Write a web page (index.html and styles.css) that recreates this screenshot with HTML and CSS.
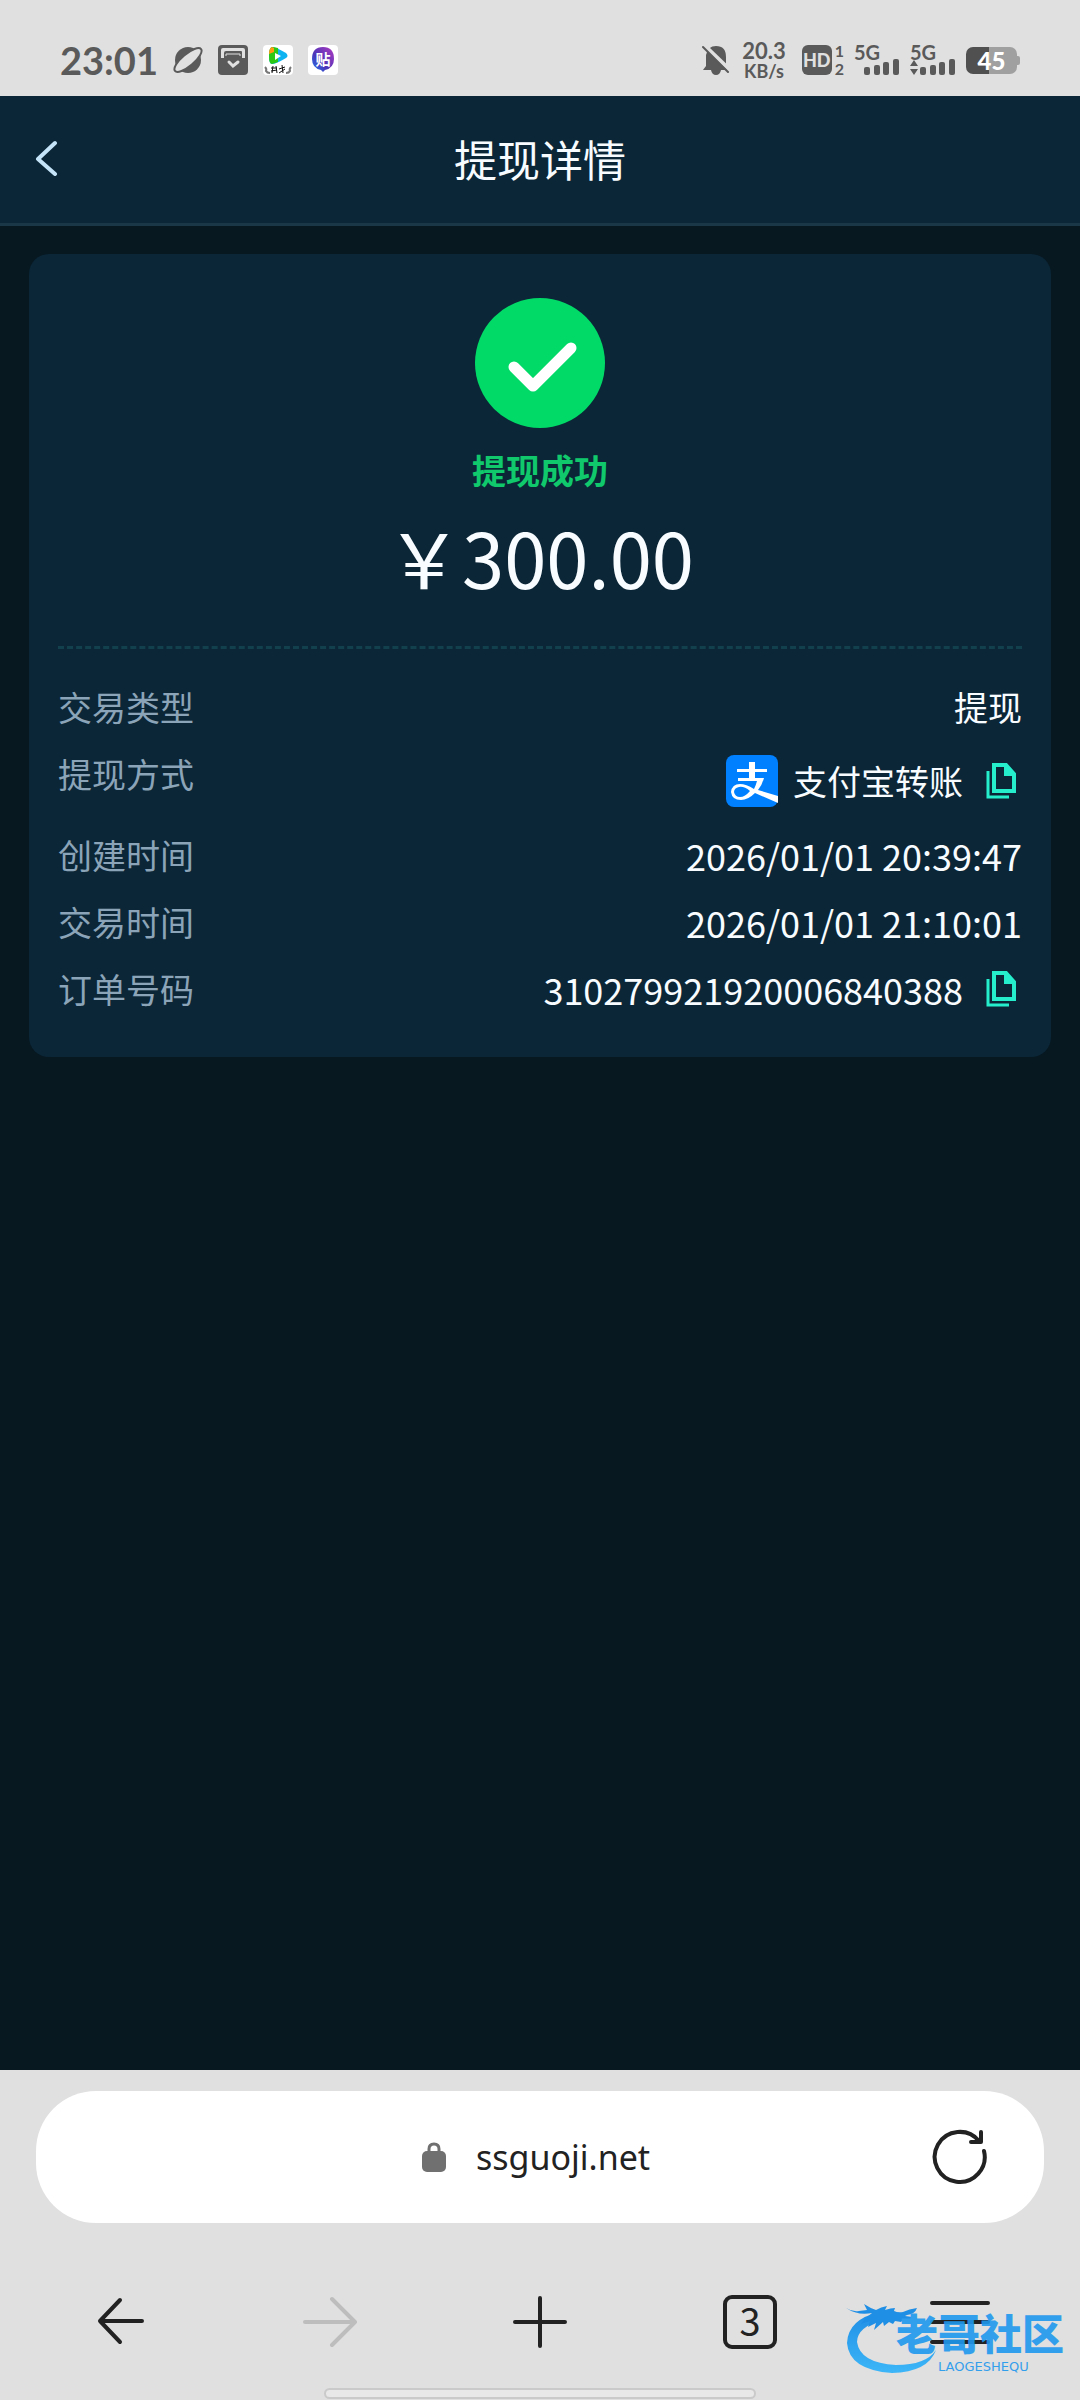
FILE: index.html
```html
<!DOCTYPE html>
<html lang="zh-CN">

<head>
    <meta charset="UTF-8">
    <meta name="viewport" content="width=device-width, initial-scale=1.0">
    <title>提现详情</title>
    <link rel="stylesheet" href="styles.css">
</head>

<body>
    <div class="status-bar">
        <div class="status-left">
            <span class="time">23:01</span>
            <svg width="30" height="30" viewBox="0 0 30 30">
                <circle cx="15" cy="15" r="13" fill="#5a5a5a"/>
                <ellipse cx="15" cy="15" rx="17" ry="6" transform="rotate(-40 15 15)" fill="#e0e0e0" stroke="#5a5a5a" stroke-width="2"/>
            </svg>
            <svg width="30" height="30" viewBox="0 0 30 30">
                <rect width="30" height="30" rx="4" fill="#5a5a5a"/>
                <path d="M3 13V5q0-2 2-2h20q2 0 2 2v8h-3V7q0-1-1-1H8Q6 6 6 8v5z" fill="#e0e0e0"/>
                <path d="M8 11V9h14v2" fill="none" stroke="#e0e0e0" stroke-width="1"/>
                <path d="M11 17l4 4 5-4" fill="none" stroke="#e0e0e0" stroke-width="3" stroke-linecap="round"/>
            </svg>
            <svg width="30" height="30" viewBox="0 0 30 30">
                <rect width="30" height="30" rx="4" fill="#fff"/>
                <path d="M9 2q-3 1-3 9t3 8q4 0 14-6 3-2 0-5Q13 2 9 2z" fill="#0db2f0"/>
                <path d="M9 2q-3 1-3 9t3 8l6-2V3q-4-1-6-1z" fill="#2bc916"/>
                <path d="M6 9q0-6 3-7l2 1v4z" fill="#ff9a13"/>
                <path d="M12 8l6 3-6 4z" fill="#fff"/>
                <path d="M2 22q2 2 1 4 1 2 4 2M28 22q-2 2-1 4-1 2-4 2" fill="none" stroke="#777" stroke-width="2"/>
                <path d="M8 23h6M10 21l-1 7M13 21l1 7M8 26l6-1M16 24l6-2M19 20l1 8M16 28l6-4" fill="none" stroke="#111" stroke-width="1"/>
            </svg>
            <svg width="30" height="30" viewBox="0 0 30 30">
                <defs>
                    <linearGradient id="tie" x1="0" y1="1" x2="1" y2="0">
                        <stop offset="0" stop-color="#1f7df0"/>
                        <stop offset="0.4" stop-color="#4a35b8"/>
                        <stop offset="1" stop-color="#b13ac0"/>
                    </linearGradient>
                </defs>
                <rect width="30" height="30" rx="4" fill="#fff"/>
                <path d="M15 2q11 0 11 12 0 9-9 11l-2 2-2-2Q4 23 4 14 4 2 15 2z" fill="url(#tie)"/>
                <text class="tie" x="15" y="20" text-anchor="middle">贴</text>
            </svg>
        </div>
        <div class="status-right">
            <svg width="28" height="30" viewBox="0 0 28 30">
                <path d="M4 10Q6 1 14 1q10 0 10 11v9l3 4H1l3-4z" fill="#5a5a5a"/>
                <path d="M9 25q1 5 5 5t5-5z" fill="#5a5a5a"/>
                <path d="M2 0l27 26" stroke="#e0e0e0" stroke-width="4"/>
                <path d="M1 2l25 25" stroke="#5a5a5a" stroke-width="2" stroke-linecap="round"/>
            </svg>
            <div class="speed"><span>20.3</span><span class="unit">KB/s</span></div>
            <div class="hd"><span class="hd-box">HD</span><span class="sim"><b>1</b><b>2</b></span></div>
            <div class="signal">
                <b>5G</b>
                <svg width="46" height="16" viewBox="0 0 46 16" fill="#5a5a5a">
                    <rect x="10" y="8" width="6" height="8" rx="2"/>
                    <rect x="20" y="6" width="6" height="10" rx="2"/>
                    <rect x="29" y="3" width="6" height="13" rx="2"/>
                    <rect x="39" y="0" width="6" height="16" rx="2"/>
                </svg>
            </div>
            <div class="signal">
                <b>5G</b>
                <svg width="46" height="16" viewBox="0 0 46 16" fill="#5a5a5a">
                    <path d="M0 7l4-6 4 6zM0 10l4 6 4-6z"/>
                    <rect x="10" y="8" width="6" height="8" rx="2"/>
                    <rect x="20" y="6" width="6" height="10" rx="2"/>
                    <rect x="29" y="3" width="6" height="13" rx="2"/>
                    <rect x="39" y="0" width="6" height="16" rx="2"/>
                </svg>
            </div>
            <div class="battery">45</div>
        </div>
    </div>

    <header class="header">
        <button class="back" type="button" aria-label="返回">
            <svg width="24" height="36" viewBox="0 0 24 36">
                <path d="M21 3L4 19l17 15" fill="none" stroke="#c5e4f8" stroke-width="4" stroke-linecap="round" stroke-linejoin="round"/>
            </svg>
        </button>
        <h1>提现详情</h1>
    </header>

    <main class="main">
        <section class="card">
            <div class="result">
                <svg width="130" height="130" viewBox="0 0 130 130">
                    <circle cx="65" cy="65" r="65" fill="#02da68"/>
                    <path d="M39 69l19 19 38-38" fill="none" stroke="#fff" stroke-width="11" stroke-linecap="round" stroke-linejoin="round"/>
                </svg>
                <p class="state">提现成功</p>
                <p class="amount">&#xFFE5;300.00</p>
            </div>
            <dl class="info">
                <div class="row">
                    <dt>交易类型</dt>
                    <dd>提现</dd>
                </div>
                <div class="row row-pay">
                    <dt>提现方式</dt>
                    <dd>
                        <svg class="alipay" width="52" height="52" viewBox="0 0 52 52">
                            <rect width="52" height="52" rx="8" fill="#0080ff"/>
                            <path d="M23 7h6v7h12v3H29v6h9q-2 7-6 12l20 6v7L29 38q-7 7-14 7-9 0-10-8 1-8 9-8 6 0 14 5 2-4 3-8H12v-3h11v-6H11v-3h12z" fill="#fff"/>
                            <path d="M24 36q-6-5-11-4-5 1-5 5 1 5 6 5 5 0 10-6z" fill="#0080ff"/>
                        </svg>
                        <span>支付宝转账</span>
                        <button class="copy" type="button" aria-label="复制提现方式">
                            <svg width="30" height="36" viewBox="0 0 30 36">
                                <path d="M2 8v26h21" fill="none" stroke="#24eecb" stroke-width="3"/>
                                <path d="M8 2h12l8 9v17H8z" fill="none" stroke="#24eecb" stroke-width="4"/>
                                <path d="M18 2l11 11H18z" fill="#24eecb"/>
                            </svg>
                        </button>
                    </dd>
                </div>
                <div class="row">
                    <dt>创建时间</dt>
                    <dd class="num">2026/01/01 20:39:47</dd>
                </div>
                <div class="row">
                    <dt>交易时间</dt>
                    <dd class="num">2026/01/01 21:10:01</dd>
                </div>
                <div class="row">
                    <dt>订单号码</dt>
                    <dd class="num">
                        <span>310279921920006840388</span>
                        <button class="copy" type="button" aria-label="复制订单号码">
                            <svg width="30" height="36" viewBox="0 0 30 36">
                                <path d="M2 8v26h21" fill="none" stroke="#24eecb" stroke-width="3"/>
                                <path d="M8 2h12l8 9v17H8z" fill="none" stroke="#24eecb" stroke-width="4"/>
                                <path d="M18 2l11 11H18z" fill="#24eecb"/>
                            </svg>
                        </button>
                    </dd>
                </div>
            </dl>
        </section>
    </main>

    <footer class="browser">
        <div class="address">
            <button class="url" type="button">
                <svg width="24" height="30" viewBox="0 0 24 30">
                    <rect y="9" width="24" height="21" rx="5" fill="#707070"/>
                    <path d="M7 11V7q0-5 5-5t5 5v4" fill="none" stroke="#707070" stroke-width="3"/>
                </svg>
                ssguoji.net
            </button>
            <button class="reload" type="button" aria-label="刷新">
                <svg width="56" height="56" viewBox="0 0 56 56" fill="none" stroke="#222" stroke-width="4" stroke-linecap="round" stroke-linejoin="round">
                    <path d="M52 22A25 25 0 1 1 47 12"/>
                    <path d="M49 3v10H39"/>
                </svg>
            </button>
        </div>
        <nav class="toolbar">
            <button type="button" aria-label="后退">
                <svg width="54" height="54" viewBox="0 0 54 54" fill="none" stroke="#222" stroke-width="4" stroke-linecap="round" stroke-linejoin="round">
                    <path d="M49 26H7M27 5L7 26l20 21"/>
                </svg>
            </button>
            <button type="button" aria-label="前进" disabled>
                <svg width="54" height="54" viewBox="0 0 54 54" fill="none" stroke="#bdbdbd" stroke-width="4" stroke-linecap="round" stroke-linejoin="round">
                    <path d="M2 27h50M29 4l23 23-23 23"/>
                </svg>
            </button>
            <button type="button" aria-label="新建标签页">
                <svg width="54" height="54" viewBox="0 0 54 54" fill="none" stroke="#222" stroke-width="4" stroke-linecap="round">
                    <path d="M2 27h50M27 3v48"/>
                </svg>
            </button>
            <button type="button" aria-label="标签页"><span class="tabs">3</span></button>
            <button type="button" aria-label="菜单">
                <svg width="60" height="54" viewBox="0 0 60 54" fill="none" stroke="#222" stroke-width="4" stroke-linecap="round">
                    <path d="M2 8h56M2 27h56M2 47h56"/>
                </svg>
            </button>
        </nav>
        <div class="home-bar"></div>
        <div class="watermark">
            <svg width="98" height="72" viewBox="0 0 98 72">
                <defs>
                    <linearGradient id="dragon" x1="0" y1="0" x2="0" y2="1">
                        <stop offset="0" stop-color="#0b86e6"/>
                        <stop offset="1" stop-color="#2cb2fb"/>
                    </linearGradient>
                </defs>
                <path d="M34 9Q2 16 1 40q2 27 45 30 36-1 44-23-10 15-40 15Q14 60 11 39 11 24 38 16z" fill="url(#dragon)"/>
                <path d="M0 5q6 4 13 3l8-1-3-6q6 4 12 6 5-3 11-4l-2 4q6-2 10-2l-1 3q4 2 9 1 6-3 14-4-2 6-10 7l-2 1q6 1 11 1l-3 3 2 2q-8 0-12-2l-2 2-6-1-2 3-4-2-5 4-1-4-9 8 2-7-8 4 2-6-9 3Q20 14 26 10 12 13 0 5z" fill="#0b86e6"/>
            </svg>
            <div class="mark-text">
                <span class="mark-name">老哥社区</span>
                <span class="mark-en">LAOGESHEQU</span>
            </div>
        </div>
    </footer>
</body>

</html>
```
FILE: styles.css
```css
*{
    margin: 0;
    padding: 0;
    box-sizing: border-box;
}
body{
    min-height: 100vh;
    display: flex;
    flex-direction: column;
    background: #071821;
    color: #f8fcff;
    font-family: "Noto Sans CJK SC", "Noto Sans", sans-serif;
    font-size: 34px;
    line-height: 48px;
}
button{
    border: 0;
    background: none;
    color: inherit;
    font: inherit;
    cursor: pointer;
}
svg{
    display: block;
    flex: none;
}

/* status bar */
.status-bar{
    height: 96px;
    padding: 24px 60px 0;
    display: flex;
    justify-content: space-between;
    align-items: center;
    background: #e0e0e0;
    color: #5a5a5a;
}
.status-left{
    display: flex;
    align-items: center;
    gap: 15px;
}
.time{
    font-family: Lato, sans-serif;
    font-size: 38px;
    font-weight: 700;
}
.status-right{
    display: flex;
    align-items: center;
    gap: 10px;
}
.speed{
    display: flex;
    flex-direction: column;
    align-items: center;
    margin: 0 6px 0 2px;
    font-family: Lato, sans-serif;
    font-size: 22px;
    font-weight: 700;
    line-height: 22px;
}
.speed .unit{
    font-size: 18px;
    line-height: 18px;
}
.hd{
    display: flex;
    align-items: center;
    gap: 3px;
}
.hd-box{
    width: 30px;
    height: 30px;
    border-radius: 6px;
    background: #5a5a5a;
    color: #e0e0e0;
    font-family: Lato, sans-serif;
    font-size: 18px;
    font-weight: 900;
    line-height: 30px;
    text-align: center;
}
.sim{
    display: flex;
    flex-direction: column;
    font-family: Lato, sans-serif;
    font-size: 16px;
    line-height: 18px;
}
.signal{
    display: flex;
    flex-direction: column;
    font-family: Lato, sans-serif;
    font-size: 20px;
    line-height: 14px;
}
.battery{
    position: relative;
    width: 51px;
    height: 27px;
    margin-right: 3px;
    border-radius: 7px;
    background: linear-gradient(90deg, #505050 45%, #a0a0a0 45%);
    color: #fff;
    font-family: Lato, sans-serif;
    font-size: 24px;
    font-weight: 900;
    line-height: 27px;
    text-align: center;
}
.battery::after{
    content: "";
    position: absolute;
    right: -3px;
    top: 9px;
    width: 3px;
    height: 9px;
    border-radius: 0 2px 2px 0;
    background: #a0a0a0;
}
.tie{
    font-size: 15px;
    font-weight: 700;
    fill: #fff;
}

/* page header */
.header{
    display: grid;
    grid-template-columns: 60px 1fr 60px;
    align-items: center;
    height: 130px;
    padding: 0 34px 4px;
    border-bottom: 3px solid #1a3748;
    background: #0b2637;
}
.header h1{
    font-size: 43px;
    font-weight: 400;
    text-align: center;
}

/* detail card */
.main{
    flex: 1;
    padding: 28px 29px;
}
.card{
    padding: 44px 29px;
    border-radius: 20px;
    background: #0b2637;
}
.result{
    display: flex;
    flex-direction: column;
    align-items: center;
    padding-bottom: 42px;
    border-bottom: 3px dashed #12404c;
}
.state{
    margin-top: 18px;
    color: #10c96c;
    font-weight: 700;
}
.amount{
    margin-top: 14px;
    font-size: 76px;
    line-height: 96px;
}
.info{
    display: flex;
    flex-direction: column;
    gap: 19px;
    padding-top: 34px;
}
.row{
    display: flex;
    justify-content: space-between;
    align-items: flex-start;
}
.row dt{
    color: #8ba4b8;
}
.row dd{
    display: flex;
    align-items: center;
}
.row .num{
    font-size: 36px;
}
.row-pay dd{
    height: 62px;
}
.alipay{
    margin-right: 15px;
}
.copy{
    padding: 0 6px 0 23px;
}

/* browser bars */
.browser{
    position: relative;
    padding-top: 21px;
    background: #e0e0e0;
    color: #222;
}
.address{
    display: grid;
    grid-template-columns: 56px 1fr 56px;
    align-items: center;
    height: 132px;
    margin: 0 36px;
    padding: 0 56px;
    border-radius: 60px;
    background: #fff;
}
.url{
    grid-column: 2;
    display: flex;
    justify-content: center;
    align-items: center;
    gap: 30px;
    padding-right: 8px;
    font-family: "Noto Sans", sans-serif;
}
.toolbar{
    display: grid;
    grid-template-columns: repeat(5, 1fr);
    height: 132px;
    margin-top: 33px;
    padding: 0 15px;
}
.toolbar button{
    display: flex;
    justify-content: center;
    align-items: center;
}
.tabs{
    width: 54px;
    height: 54px;
    border: 4px solid #222;
    border-radius: 9px;
    font-size: 38px;
    line-height: 42px;
}
.home-bar{
    width: 40%;
    height: 11px;
    margin: 0 auto 1px;
    border: 2px solid #cacaca;
    border-radius: 6px;
    background: #e8e8e8;
}
.watermark{
    position: absolute;
    right: 16px;
    bottom: 25px;
    display: flex;
    align-items: flex-end;
    color: #1f98ee;
    opacity: 0.9;
    pointer-events: none;
}
.mark-text{
    display: flex;
    flex-direction: column;
    margin-left: -48px;
}
.mark-name{
    font-size: 42px;
    font-weight: 900;
    line-height: 54px;
}
.mark-en{
    padding-left: 42px;
    font-family: "DejaVu Sans", sans-serif;
    font-size: 13px;
    line-height: 16px;
}
```
